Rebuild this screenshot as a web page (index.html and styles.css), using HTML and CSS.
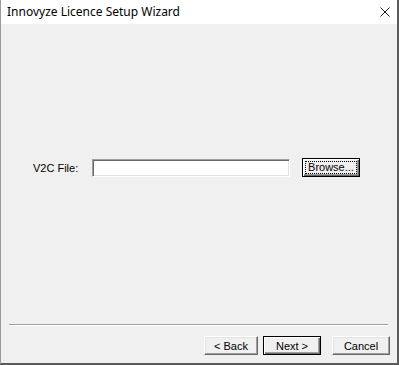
FILE: index.html
```html
<!DOCTYPE html>
<html>
<head>
<meta charset="utf-8">
<title>Innovyze Licence Setup Wizard</title>
<link rel="stylesheet" href="styles.css">
</head>
<body>
<div class="window">
  <div class="titlebar">
    <span class="title">Innovyze Licence Setup Wizard</span>
    <span class="close">
      <svg width="10" height="10" viewBox="0 0 10 10"><path d="M0.5 0.5 L9.5 9.5 M9.5 0.5 L0.5 9.5" stroke="#1a1a1a" stroke-width="1" fill="none"/></svg>
    </span>
  </div>
  <div class="content">
    <div class="page">
      <div class="file-row">
        <span class="label">V2C File:</span>
        <div class="textbox"></div>
        <div class="btn browse"><span class="focus">Browse...</span></div>
      </div>
    </div>
    <div class="separator"></div>
    <div class="buttons">
      <div class="btn back">&lt; Back</div>
      <div class="btn next">Next &gt;</div>
      <div class="btn cancel">Cancel</div>
    </div>
  </div>
</div>
</body>
</html>
```

FILE: styles.css
```css
html, body {
  margin: 0;
  padding: 0;
  background: #f0f0f0;
}
.window {
  box-sizing: border-box;
  width: 399px;
  height: 365px;
  display: flex;
  flex-direction: column;
  background: #f0f0f0;
  border-left: 1px solid #9a9a9a;
  border-right: 2px solid #5a5a5a;
  border-bottom: 2px solid #5a5a5a;
  font-family: "Liberation Sans", Arial, sans-serif;
  font-size: 11px;
  color: #000;
}
.titlebar {
  height: 24px;
  flex: none;
  background: #ffffff;
  display: flex;
  align-items: center;
  justify-content: space-between;
  padding: 0 7px 0 6px;
}
.title {
  font-family: "Noto Sans", "Open Sans", sans-serif;
  font-size: 12px;
  color: #000;
  position: relative;
  top: -1px;
}
.close {
  display: flex;
  width: 10px;
  justify-content: center;
}
.content {
  flex: 1;
  display: flex;
  flex-direction: column;
}
.page {
  flex: 1;
  padding-top: 134px;
}
.file-row {
  display: flex;
  align-items: center;
  padding-left: 32px;
}
.label {
  flex: none;
  width: 59px;
  white-space: nowrap;
}
.textbox {
  flex: none;
  box-sizing: border-box;
  width: 198px;
  height: 18px;
  background: #fff;
  border-top: 1px solid #a0a0a0;
  border-left: 1px solid #a0a0a0;
  border-right: 1px solid #fff;
  border-bottom: 1px solid #fff;
  box-shadow: inset 1px 1px 0 #696969, inset -1px -1px 0 #e3e3e3;
}
.btn {
  flex: none;
  box-sizing: border-box;
  height: 19px;
  display: flex;
  align-items: center;
  justify-content: center;
  background: #f0f0f0;
  border-top: 1px solid #ffffff;
  border-left: 1px solid #ffffff;
  border-right: 1px solid #696969;
  border-bottom: 1px solid #696969;
  box-shadow: inset -1px -1px 0 #a0a0a0, inset 1px 1px 0 #e3e3e3;
  font-size: 11px;
}
.browse {
  width: 58px;
  margin-left: 12px;
  border: 1px solid #000;
  box-shadow: inset 1px 1px 0 #fff, inset -1px -1px 0 #696969, inset -2px -2px 0 #a0a0a0;
}
.focus {
  display: block;
  box-sizing: border-box;
  width: 52px;
  height: 13px;
  line-height: 11px;
  text-align: center;
  border: 1px dotted #000;
}
.separator {
  flex: none;
  height: 1px;
  margin: 0 9px 0 8px;
  background: #a0a0a0;
  border-bottom: 1px solid #ffffff;
}
.buttons {
  flex: none;
  display: flex;
  justify-content: flex-end;
  padding: 10px 7px 8px 0;
}
.back {
  width: 54px;
}
.next {
  width: 58px;
  margin-left: 5px;
  border: 1px solid #000;
  box-shadow: inset 1px 1px 0 #fff, inset -1px -1px 0 #696969, inset -2px -2px 0 #a0a0a0;
}
.cancel {
  width: 58px;
  margin-left: 11px;
}
```
